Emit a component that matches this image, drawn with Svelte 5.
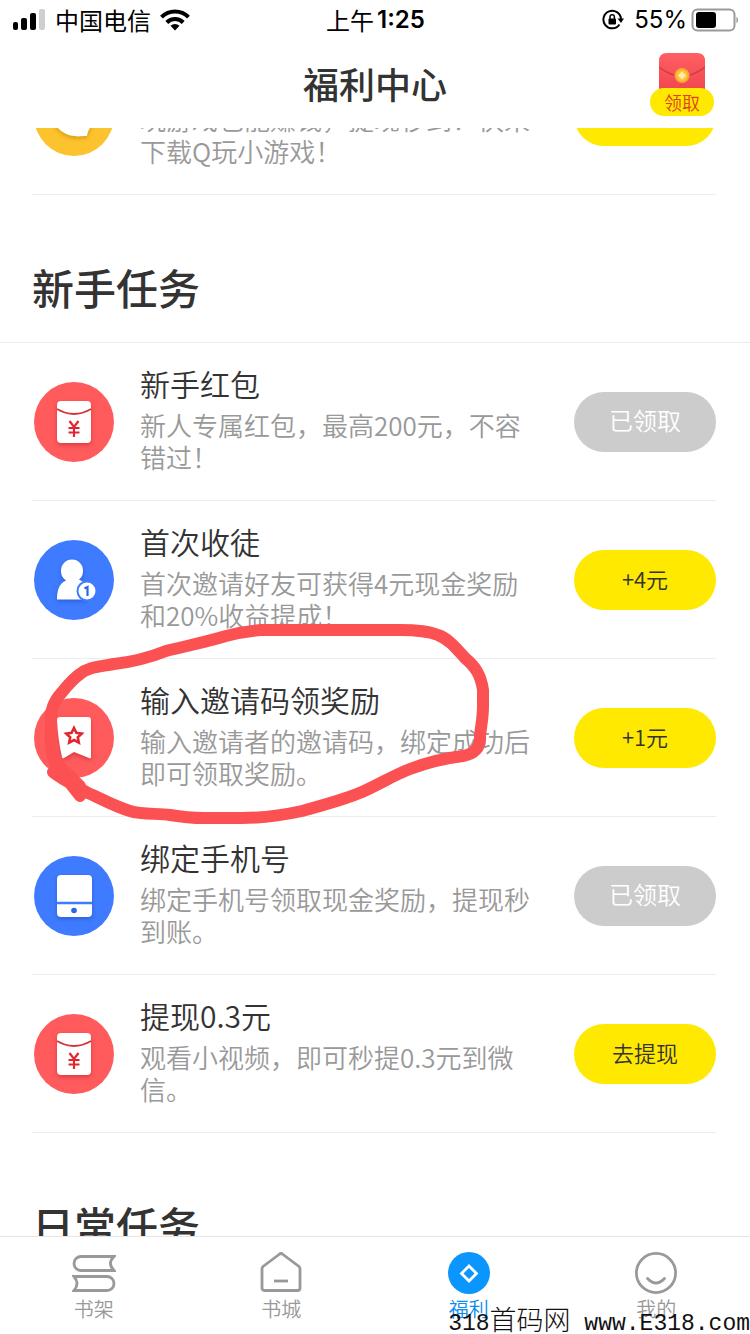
<script lang="ts">
  import { onMount } from 'svelte';

  type Task = {
    icon: 'game' | 'packet' | 'friend' | 'ticket' | 'phone';
    title: string;
    desc: string;
    action: string;
    done?: boolean;
    marked?: boolean;
  };

  const gameTask: Task = { icon: 'game', title: 'Q玩小游戏', desc: '玩游戏也能赚钱，提现秒到！快来下载Q玩小游戏！', action: '+1元' };

  const newbieTasks: Task[] = [
    { icon: 'packet', title: '新手红包', desc: '新人专属红包，最高200元，不容错过！', action: '已领取', done: true },
    { icon: 'friend', title: '首次收徒', desc: '首次邀请好友可获得4元现金奖励和20%收益提成！', action: '+4元' },
    { icon: 'ticket', title: '输入邀请码领奖励', desc: '输入邀请者的邀请码，绑定成功后即可领取奖励。', action: '+1元', marked: true },
    { icon: 'phone', title: '绑定手机号', desc: '绑定手机号领取现金奖励，提现秒到账。', action: '已领取', done: true },
    { icon: 'packet', title: '提现0.3元', desc: '观看小视频，即可秒提0.3元到微信。', action: '去提现' }
  ];

  const tabs = [
    { id: 'shelf', label: '书架' },
    { id: 'store', label: '书城' },
    { id: 'welfare', label: '福利' },
    { id: 'mine', label: '我的' }
  ];

  let active = $state('welfare');
  let list: HTMLElement;

  onMount(() => {
    list.scrollTop = 91;
  });
</script>

{#snippet taskIcon(kind: string)}
  <svg class="task-icon" viewBox="0 0 80 80" aria-hidden="true">
    {#if kind === 'game'}
      <circle cx="40" cy="40" r="40" fill="#fdc32e" />
      <path class="lift-gold" d="M18 38a22 22 0 0 1 44 0c0 5-2 8-6 13 0 2-2 3-3 9-5 0-9 1-13 0-12-1-22-11-22-22z" fill="#fff" />
    {:else if kind === 'packet'}
      <circle cx="40" cy="40" r="40" fill="#ff5b5c" />
      <g class="lift-red">
        <rect x="23" y="19" width="34" height="42" rx="4" fill="#fff" />
      </g>
      <path d="M23 27q17 10 34 0" fill="none" stroke="#d9333a" stroke-width="2" />
      <path d="M35.500 39l4.500 6 4.500-6M40 45v10M34.500 46h11M34.500 50.500h11" fill="none" stroke="#e0262e" stroke-width="2.200" />
    {:else if kind === 'friend'}
      <circle cx="40" cy="40" r="40" fill="#3f7bff" />
      <g class="lift-blue">
        <path d="M23 59.500c0-9 2-16 9-19-4-3-5-6-5-10a11 11 0 0 1 22 0c0 4-1 7-4 9 4 2 6 4 8 8v12z" fill="#fff" />
      </g>
      <circle cx="53" cy="51" r="9.500" fill="#fff" stroke="#3f7bff" stroke-width="2" />
      <path d="M50.500 48.500l3-1.500v9" fill="none" stroke="#2c66e8" stroke-width="2.200" />
    {:else if kind === 'ticket'}
      <circle cx="40" cy="40" r="40" fill="#ff5b5c" />
      <g class="lift-red">
        <path d="M26 19h28q3 0 3 3v37q0 2-2 1l-15-6-10 6q-2 1-2-1-4-17-5-37 0-3 3-3z" fill="#fff" />
      </g>
      <path d="M40 30l2.400 4.900 5.300.7-3.900 3.700 1 5.300-4.800-2.600-4.800 2.600 1-5.300-3.900-3.700 5.300-.7z" fill="none" stroke="#e0262e" stroke-width="2.600" />
    {:else}
      <circle cx="40" cy="40" r="40" fill="#3f7bff" />
      <g class="lift-blue">
        <rect x="23" y="19" width="35" height="42" rx="4" fill="#fff" />
      </g>
      <path d="M23 47h35" stroke="#3f7bff" stroke-width="2.500" />
      <circle cx="40" cy="54.500" r="2.800" fill="#2c66e8" />
    {/if}
  </svg>
{/snippet}

{#snippet taskRow(task: Task)}
  <li class="task">
    {@render taskIcon(task.icon)}
    <div class="task-text">
      <h3>{task.title}</h3>
      <p>{task.desc}</p>
    </div>
    <button class="pill" class:done={task.done} disabled={task.done}>{task.action}</button>
    {#if task.marked}
      <svg class="marker" viewBox="40 616 460 214" aria-hidden="true">
        <path
          d="M53 772C63 780 76 786 88 793C102 799 114 806 130 811C142 815 158 813 170 815C182 817 190 818 204 818H242C262 818 284 815 302 811C324 805 346 799 362 792C380 784 394 775 410 769C426 763 446 758 463 756C474 754 481 748 480 736C481 726 483 718 483 706V690C481 676 476 667 465 658C456 648 449 639 438 635C428 631 414 630 400 630H262C248 631 238 633 226 636C206 642 186 646 166 651C146 659 132 662 114 664C98 667 88 667 80 674C70 681 65 689 58 697C50 708 51 716 51 728C50 742 51 756 57 766C63 776 71 784 80 796"
        />
        <path d="M57 764L80 786" />
      </svg>
    {/if}
  </li>
{/snippet}

<div class="app">
  <div class="status">
    <div class="status-left">
      <svg width="34" height="22" viewBox="0 0 34 22" aria-hidden="true">
        <rect x="1" y="13" width="5" height="8" rx="2" />
        <rect x="9" y="9" width="6" height="12" rx="2" />
        <rect x="18" y="4" width="6" height="17" rx="2" />
        <rect x="27" y="0" width="6" height="21" rx="2" fill="#cfcfcf" />
      </svg>
      <span class="carrier">中国电信</span>
      <svg width="30" height="22" viewBox="0 0 30 22" fill="none" stroke="#000" stroke-width="4" aria-hidden="true">
        <path d="M1.500 8.200a19 19 0 0 1 27 0" />
        <path d="M6.800 13.500a11.500 11.500 0 0 1 16.400 0" />
        <path d="M15 21.500l-4.500-4.800a6.500 6.500 0 0 1 9 0z" fill="#000" stroke="none" />
      </svg>
    </div>
    <div class="time">上午<b>1:25</b></div>
    <div class="status-right">
      <svg width="22" height="22" viewBox="0 0 22 22" aria-hidden="true">
        <path d="M17.500 15.500a8.800 8.800 0 1 1 1.500-5.500" fill="none" stroke="#000" stroke-width="2" />
        <path d="M15.500 9.500h6.500l-3 4.500z" />
        <rect x="6.500" y="9.500" width="7.500" height="6" rx="1" />
        <path d="M8 10V8a2.200 2.200 0 0 1 4.400 0v2" fill="none" stroke="#000" stroke-width="1.500" />
      </svg>
      <span class="percent">55%</span>
      <svg class="battery" width="49" height="24" viewBox="0 0 49 24" aria-hidden="true">
        <rect x="2.500" y="1.500" width="42" height="21" rx="5" fill="none" stroke="#9a9a9a" stroke-width="2" />
        <rect x="6" y="4" width="20" height="16" rx="3" />
        <path d="M46.500 8.500q3 3.500 0 7z" fill="#8c8c8c" />
      </svg>
    </div>
  </div>

  <header>
    <h1>福利中心</h1>
    <button class="claim">
      <svg width="46" height="36" viewBox="0 0 46 36" aria-hidden="true">
        <defs>
          <linearGradient id="packet-body" x1="0" y1="0" x2="0" y2="1">
            <stop offset="0" stop-color="#ff5f63" />
            <stop offset="1" stop-color="#f0484f" />
          </linearGradient>
        </defs>
        <path d="M0 36V8q0-8 8-8h30q8 0 8 8v28z" fill="url(#packet-body)" />
        <path d="M0 14q23 18 46 0" fill="none" stroke="#d43c46" stroke-width="1.500" />
        <circle cx="23" cy="22.500" r="7.500" fill="#f9a92c" />
        <circle cx="23" cy="22.500" r="5.500" fill="#fbc53f" />
        <path d="M23 18.500l4 4-4 4-4-4z" fill="#fff0a0" />
      </svg>
      <span>领取</span>
    </button>
  </header>

  <main bind:this={list}>
    <ul>
      {@render taskRow(gameTask)}
    </ul>
    <h2>新手任务</h2>
    <ul>
      {#each newbieTasks as task}
        {@render taskRow(task)}
      {/each}
    </ul>
    <h2>日常任务</h2>
  </main>

  <nav>
    {#each tabs as tab}
      <button class="tab" class:active={active === tab.id} onclick={() => (active = tab.id)}>
        <svg width="44" height="42" viewBox="0 0 44 42" fill="none" stroke="currentColor" stroke-width="2.800" aria-hidden="true">
          {#if tab.id === 'shelf'}
            <path d="M42 4.500H9a7 7 0 0 0 0 14H42q-7-7 0-14z" />
            <path d="M2 24.500H35a7 7 0 0 1 0 14H2q6-7 0-14z" />
          {:else if tab.id === 'store'}
            <path d="M22 1.500q1 0 2 1L40 14.500q1 1 1 2.500V36q0 2.500-2.500 2.500h-33Q3 38.500 3 36V17q0-1.500 1-2.500L20 2.500q1-1 2-1z" />
            <path d="M15 29h14" />
          {:else if tab.id === 'welfare'}
            <circle cx="22" cy="21" r="21" fill="#0a96fd" stroke="none" />
            <path d="M22 14l7.500 7.500-7.500 7.500-7.500-7.500z" stroke="#fff" />
          {:else}
            <circle cx="22" cy="21" r="19.600" />
            <path d="M13.500 26.500q8.500 9 17 0" stroke-linecap="round" />
          {/if}
        </svg>
        <span>{tab.label}</span>
      </button>
    {/each}
    <div class="watermark">318<span>首码网</span> www.E318.com</div>
  </nav>
</div>

<style>
  :global(body) {
    margin: 0;
    background: #fff;
  }

  .app {
    display: flex;
    flex-direction: column;
    height: 100vh;
    overflow: hidden;
    color: #333;
    background: #fff;
    font-family: 'Noto Sans CJK SC', sans-serif;
  }

  button {
    margin: 0;
    padding: 0;
    border: 0;
    background: none;
    color: inherit;
    font: inherit;
  }

  h1, h2, h3, p, ul {
    margin: 0;
    padding: 0;
  }

  svg {
    display: block;
    flex: none;
  }

  .status {
    display: grid;
    grid-template-columns: 1fr auto 1fr;
    align-items: center;
    height: 40px;
    padding: 0 11px 0 12px;
    color: #000;
    font-size: 24px;
    line-height: 40px;
  }

  .status-left,
  .status-right,
  .time {
    display: flex;
    align-items: center;
  }

  .status-left {
    gap: 9px;
  }

  .status-right {
    justify-content: flex-end;
  }

  .percent {
    margin: 0 3px 0 10px;
    font-family: Inter, sans-serif;
  }

  .time b {
    margin-left: 3px;
    font-family: Inter, sans-serif;
    font-weight: 600;
    font-size: 24px;
  }

  header {
    position: relative;
    flex: none;
    height: 88px;
  }

  h1 {
    font-size: 36px;
    font-weight: 500;
    line-height: 86px;
    text-align: center;
  }

  .claim {
    position: absolute;
    top: 13px;
    right: 36px;
    display: flex;
    flex-direction: column;
    align-items: center;
    width: 64px;
  }

  .claim span {
    align-self: stretch;
    margin-top: -1px;
    border-radius: 14px;
    background: #ffe900;
    color: #e0401c;
    font-size: 18px;
    font-weight: 350;
    line-height: 28px;
  }

  main {
    flex: 1;
    min-height: 0;
    overflow-y: auto;
    scrollbar-width: none;
  }

  ul {
    list-style: none;
  }

  .task {
    position: relative;
    display: flex;
    align-items: center;
    box-sizing: border-box;
    min-height: 158px;
    margin: 0 34px 0 32px;
    padding-left: 2px;
    border-bottom: 1px solid #ececec;
  }

  .task-icon {
    width: 80px;
    height: 80px;
  }

  .lift-red {
    filter: drop-shadow(0 2px 2px #d93a40);
  }

  .lift-blue {
    filter: drop-shadow(0 2px 2px #2c60d8);
  }

  .lift-gold {
    filter: drop-shadow(0 2px 2px #d79a10);
  }

  .task-text {
    flex: 1;
    margin: 0 38px 9px 26px;
  }

  h3 {
    margin-bottom: 5px;
    font-size: 30px;
    font-weight: 350;
    line-height: 42px;
  }

  p {
    color: #999;
    font-size: 26px;
    font-weight: 350;
    line-height: 32px;
  }

  .pill {
    box-sizing: border-box;
    flex: none;
    width: 142px;
    height: 60px;
    padding-bottom: 4px;
    border-radius: 30px;
    background: #ffe900;
    color: #333;
    font-size: 22px;
    font-weight: 350;
    line-height: 56px;
  }

  .pill.done {
    background: #ccc;
    color: #fff;
    font-size: 24px;
  }

  .marker {
    position: absolute;
    top: -43px;
    left: 8px;
    width: 460px;
    height: 214px;
    fill: none;
    stroke: #fb5153;
    stroke-width: 12px;
    stroke-linecap: round;
    stroke-linejoin: round;
    pointer-events: none;
    z-index: 1;
  }

  h2 {
    padding: 60px 32px 23px;
    border-bottom: 1px solid #ececec;
    font-size: 42px;
    font-weight: 500;
    line-height: 64px;
  }

  nav {
    position: relative;
    display: flex;
    flex: none;
    height: 97px;
    border-top: 1px solid #e6e6e6;
    background: #fff;
  }

  .tab {
    display: flex;
    flex: 1;
    flex-direction: column;
    align-items: center;
    padding-top: 15px;
    color: #999;
    font-size: 20px;
    font-weight: 350;
    line-height: 30px;
  }

  .tab.active {
    color: #0a8cf0;
  }

  .watermark {
    position: absolute;
    right: 0;
    bottom: 0;
    color: #111;
    font-family: 'Liberation Mono', monospace;
    font-size: 23px;
    line-height: 20px;
    white-space: pre;
  }

  .watermark span {
    font-family: 'Noto Sans CJK SC', sans-serif;
    font-size: 27px;
    font-weight: 300;
  }
</style>
